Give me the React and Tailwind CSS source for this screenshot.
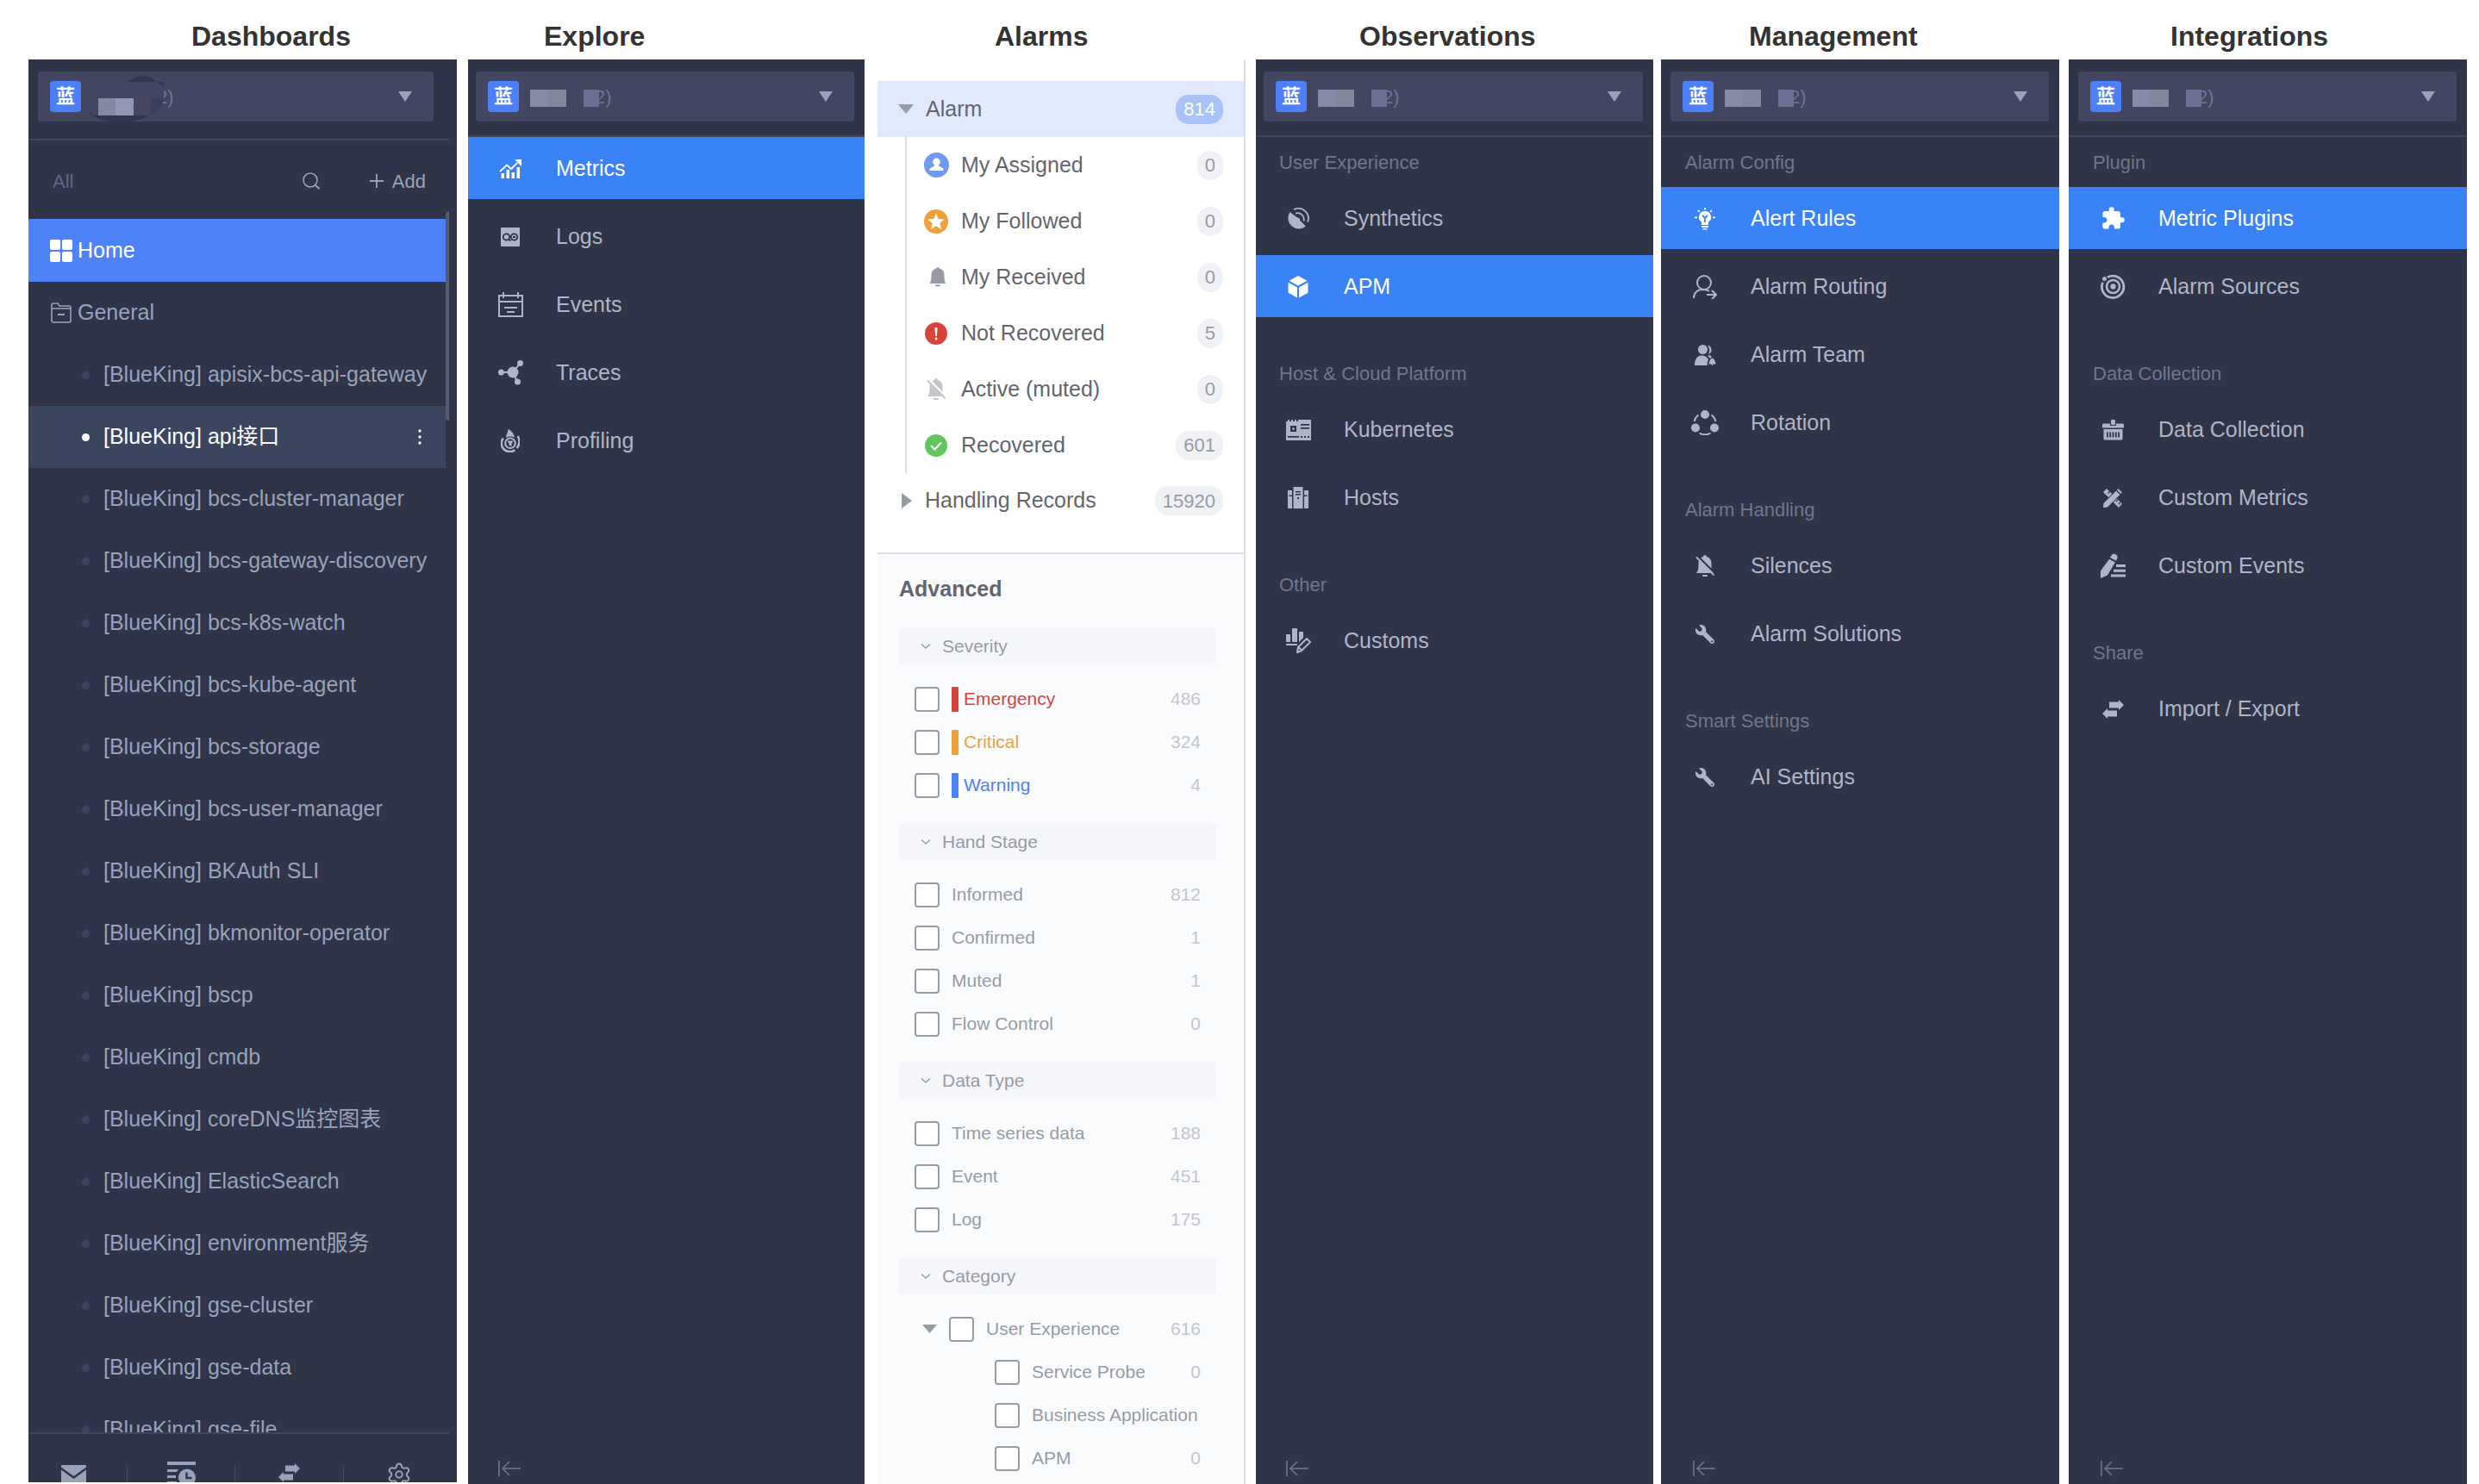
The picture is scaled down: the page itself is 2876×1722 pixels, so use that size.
import { useState } from "react";
import { MdExtension } from "react-icons/md";
import { FaWrench } from "react-icons/fa";
import { Settings } from "lucide-react";

const BG = "#2f3449";

/* ---------- icons ---------- */

function Svg({ w, h, children, className = "" }) {
  return (
    <svg width={w} height={h} viewBox={`0 0 ${w} ${h}`} fill="currentColor" aria-hidden="true" className={`shrink-0 ${className}`}>
      {children}
    </svg>
  );
}

const line = { fill: "none", stroke: "currentColor", strokeWidth: 2 };

const MetricsIcon = () => (
  <Svg w={26} h={22}>
    <path d="M1 14 9 6.500l5 4.500 7-7" {...line} />
    <path d="M18 0h8v8z" />
    <path d="M2.500 16h3.500v6H2.500zM8.500 12h3.500v10H8.500zM14.500 15h3.500v7h-3.500zM20.500 9h3.500v13h-3.500z" />
  </Svg>
);
const LogsIcon = () => (
  <Svg w={22} h={22}>
    <rect width="22" height="22" rx="1" />
    <g fill="none" stroke={BG} strokeWidth="1.800">
      <circle cx="6.500" cy="11" r="3.700" />
      <circle cx="15.500" cy="11" r="3.700" />
      <path d="M14 11h3M9 13.500l2.500 2" />
    </g>
  </Svg>
);
const EventsIcon = () => (
  <Svg w={29} h={29}>
    <path d="M1 4h27v24H1zM1 11h27M6 0v7M23 0v7M7 18h15M10 23h9" {...line} />
  </Svg>
);
const TracesIcon = () => (
  <Svg w={29} h={29}>
    <path d="M3 14h14M17 14l8-10M17 14l5 11" {...line} />
    <circle cx="17" cy="14" r="6.500" />
    <circle cx="3.500" cy="14" r="3.500" />
    <circle cx="25.500" cy="3.500" r="3.500" />
    <circle cx="22.500" cy="25" r="3.500" />
  </Svg>
);
const ProfilingIcon = () => (
  <Svg w={22} h={27}>
    <path d="M8.500 0c4 2 7 5.500 7.500 9.500-3-1.500-7.500-1.300-10 .5 0-4 2.500-6 2.500-10z" />
    <path d="M2.800 10.500a9.700 9.700 0 0 0 13.500 13.700M19.500 8a11 11 0 0 1-1 14" {...line} strokeWidth="2.600" />
    <circle cx="11" cy="16.300" r="5.800" {...line} />
    <path d="M7.500 13.500h7l-2 3.200v3.300l-3-1.500v-2z" />
  </Svg>
);
const SyntheticsIcon = () => (
  <Svg w={26} h={26}>
    <path d="M3.500 5 12 11.500a2.500 2.500 0 0 1 3 3L22 21.500A12.500 12.500 0 0 1 3.500 5z" />
    <path d="M8 2.200a11.500 11.500 0 0 1 16 14.500M10 6.500a7.500 7.500 0 0 1 9.500 9" {...line} strokeWidth="1.800" />
  </Svg>
);
const CubeIcon = () => (
  <Svg w={24} h={26}>
    <path d="M12 0l10.500 5.800L12 11.500 1.500 5.800z" />
    <path d="M.5 7.800 11 13.500V25.500L.5 19.700zM23.500 7.800 13 13.500V25.500l10.500-5.800z" />
  </Svg>
);
const KubernetesIcon = () => (
  <Svg w={29} h={24}>
    <path d="M0 2h2V0h2v2h2V0h2v2h2V0h2v2h2V0h15v24H0z" />
    <g fill={BG}>
      <path d="M5 7h7v7H5z" />
      <path d="M17 5h10v1.800H17zM17 9h10v1.800H17zM2 19h13v1.800H2zM17 19h2v2h-2zM21 19h2v2h-2zM25 19h2v2h-2z" />
    </g>
    <path d="M7.300 9.300h2.400v2.400H7.300z" />
  </Svg>
);
const HostsIcon = () => (
  <Svg w={24} h={25}>
    <path d="M0 4h5v21H0zM6.500 0h11v25h-11zM19 4h5v21h-5z" />
    <g fill={BG}>
      <path d="M9 5h6v1.400H9zM9 8h6v1.400H9zM11 12h2v2h-2zM1.500 9.500H5V11H1.500zM19 9.500h3.500V11H19z" />
    </g>
  </Svg>
);
const CustomsIcon = () => (
  <Svg w={29} h={29}>
    <rect x="0" y="7" width="5" height="9" rx="1" />
    <rect x="7" y="0" width="6" height="16" rx="1" />
    <path d="M15 5a1 1 0 0 1 1-1h3a1 1 0 0 1 1 1v6l-5 5zM0 18h13v2H0z" />
    <path d="M13 28l1-6L24 12l4 4-10 10zM14.500 22l4 4" {...line} strokeLinejoin="round" />
  </Svg>
);
const BulbIcon = () => (
  <Svg w={24} h={26}>
    <path d="M12 4a7 7 0 0 1 4 12.800V20H8v-3.200A7 7 0 0 1 12 4z" />
    <path d="M8 21h8v2H8zM9.500 24h5v1.500h-5zM11.200 0h1.700v2.500h-1.700zM0 10.500h3v1.700H0zM21 10.500h3v1.700h-3z" />
    <path d="M4 3l1.800 1.800M20 3l-1.800 1.800" {...line} strokeWidth="1.700" />
    <path d="M9 9l3 3 3-3M12 12v5" fill="none" stroke="#3a82f7" strokeWidth="1.800" />
  </Svg>
);
const RoutingIcon = () => (
  <Svg w={28} h={28}>
    <circle cx="13" cy="9" r="8" {...line} />
    <path d="M1 27c0-6 4-10 10-10 3 0 6 .3 8 2M16 23h11M22 18l5 5-5 5" {...line} />
  </Svg>
);
const TeamIcon = () => (
  <Svg w={25} h={24}>
    <circle cx="9.500" cy="5.500" r="5.500" />
    <path d="M15 .5a5.500 5.500 0 0 1 1 10.500c2-3 1.500-7-1-10.500z" />
    <path d="M0 24c0-8 4-11.500 8-11.500 3.500 0 7 1.500 8 5-1 1.500-1.500 4-1.500 6.500zM15 12.500c3-.5 4 0 5 2l-2.500 1.300z" />
    <path d="M16 22.500c1.200-1 1-6 4.500-7 3.500 1 3.300 6 4.500 7z" />
    <circle cx="20.500" cy="23" r="1" />
  </Svg>
);
const RotationIcon = () => (
  <Svg w={32} h={29}>
    <circle cx="16" cy="5" r="5" />
    <circle cx="5" cy="20.500" r="5" />
    <circle cx="27" cy="20.500" r="5" />
    <path d="M3.500 13a13 13 0 0 1 5-7.500M28.500 13a13 13 0 0 0-5-7.500M9.500 26.500a13 13 0 0 0 13 0" {...line} />
  </Svg>
);
const BellOffIcon = ({ cut = BG }) => (
  <Svg w={22} h={25}>
    <path d="M11 0a2 2 0 0 1 2 2c4 1 5.500 4 5.500 8 0 5 0 8 2.500 11h-20C3.500 18 3.500 15 3.500 10c0-4 1.500-7 5.500-8a2 2 0 0 1 2-2zM8 23h6a3 3 0 0 1-6 0z" />
    <path d="M2 .5 23 21.500" stroke={cut} strokeWidth="2" />
    <path d="M1 2.500 21.500 23.500" stroke="currentColor" strokeWidth="1.800" />
  </Svg>
);
const BellIcon = () => (
  <Svg w={20} h={23}>
    <path d="M10 0a1.800 1.800 0 0 1 1.800 1.600C16 2.500 17.500 6 17.500 10c0 5 .3 6.500 2 9H.5c1.700-2.500 2-4 2-9 0-4 1.500-7.500 5.700-8.400A1.800 1.800 0 0 1 10 0zM7 20.500h6a3 2 0 0 1-6 0z" />
  </Svg>
);
const WrenchIcon = () => <FaWrench size={22} aria-hidden="true" className="-scale-x-100" />;
const PuzzleIcon = () => <MdExtension size={29} aria-hidden="true" />;
const SourcesIcon = () => (
  <Svg w={29} h={29}>
    <circle cx="14.500" cy="14.500" r="3.200" />
    <circle cx="14.500" cy="14.500" r="7.500" {...line} strokeWidth="2.600" />
    <path d="M8 3.700a12.700 12.700 0 1 1-5.500 6" {...line} strokeWidth="2.800" />
    <circle cx="4.500" cy="5.500" r="2.500" />
  </Svg>
);
const CollectionIcon = () => (
  <Svg w={25} h={24}>
    <path d="M0 6a1.500 1.500 0 0 1 1.500-1.500H9V7h7V4.500h7.500A1.500 1.500 0 0 1 25 6v3.500H0z" />
    <rect x="10" y="0" width="5" height="6" rx="1" />
    <path d="M1.500 11h22v11a1.500 1.500 0 0 1-1.500 1.500H3A1.500 1.500 0 0 1 1.500 22z" />
    <path d="M5 14.500h1.800v6H5zM8.300 14.500h1.800v6H8.300zM11.600 14.500h1.800v6h-1.800zM14.900 14.500h1.800v6h-1.800zM18.200 14.500H20v6h-1.800z" fill={BG} />
  </Svg>
);
const ToolsIcon = () => (
  <Svg w={22} h={22}>
    <path d="M0 4 4 0 22 17.500 18 22z" />
    <path d="M7.500 3.500 5.500 5.500M17 13l-2 2M19.800 16l-2 2" stroke={BG} strokeWidth="1.300" />
    <path d="M0 22 22 0" stroke={BG} strokeWidth="8" />
    <path d="M0 22l.5-5L15 2.500 19.500 7 5 21.500zM16 1.500 17.500 0 22 4.500 20.500 6z" />
  </Svg>
);
const CustomEventsIcon = () => (
  <Svg w={29} h={29}>
    <path d="M12.500 2.500c1.500-3.500 8.500-1 7 3L18 8.800l-7-3.700zM10 6.800l7 3.700L8 25.500 0 29V20.500z" />
    <path d="M18 13h11v3H18zM15 18.800h14v3H15zM12 24.600h17v3H12z" />
  </Svg>
);
const SwapIcon = () => (
  <Svg w={25} h={22}>
    <path d="M8 2.500h11V0l6 6-6 6V9.500H8zM17 12.500H6V10l-6 6 6 6v-2.500h11z" />
  </Svg>
);
const MailIcon = () => (
  <Svg w={29} h={22}>
    <path d="M1 0h27a1 1 0 0 1 1 1v1.500L14.500 13 0 2.500V1a1 1 0 0 1 1-1z" />
    <path d="M0 5.500 14.500 16 29 5.500V22H0z" />
  </Svg>
);
const ScheduleIcon = () => (
  <Svg w={33} h={30}>
    <path d="M0 0h33v4H0zM0 9h13l-2 3H0zM0 16h10v3H0zM0 23h11v3H0z" />
    <circle cx="23" cy="18.500" r="10" />
    <path d="M22.500 12.500V19h6" fill="none" stroke={BG} strokeWidth="2.400" />
  </Svg>
);
const CollapseIcon = () => (
  <Svg w={26} h={18}>
    <path d="M1 0v18M4 9h22M13 1 5 9l8 8" {...line} />
  </Svg>
);
const SearchIcon = () => (
  <Svg w={20} h={20}>
    <circle cx="9" cy="9" r="8" {...line} strokeWidth="1.600" />
    <path d="M15 15l4.500 4" {...line} />
  </Svg>
);
const PlusIcon = () => (
  <Svg w={16} h={16}>
    <path d="M8 0v16M0 8h16" {...line} strokeWidth="1.800" />
  </Svg>
);
const HomeIcon = () => (
  <Svg w={26} h={26}>
    <rect width="12" height="12" rx="2" />
    <rect x="14" width="12" height="12" rx="2" />
    <rect y="14" width="12" height="12" rx="2" />
    <rect x="14" y="14" width="12" height="12" rx="2" />
  </Svg>
);
const FolderIcon = () => (
  <Svg w={24} h={24}>
    <path d="M1 3a2 2 0 0 1 2-2h5l2 3h11a2 2 0 0 1 2 2v15a2 2 0 0 1-2 2H3a2 2 0 0 1-2-2zM1 7h22" {...line} strokeWidth="1.600" />
    <path d="M8 14h8" {...line} />
  </Svg>
);
const MoreIcon = () => (
  <Svg w={4} h={18}>
    <circle cx="2" cy="2" r="1.700" />
    <circle cx="2" cy="9" r="1.700" />
    <circle cx="2" cy="16" r="1.700" />
  </Svg>
);
const CaretDown = ({ w = 16, h = 12, className }) => (
  <Svg w={w} h={h} className={className}>
    <path d={`M0 0H${w}L${w / 2} ${h}z`} />
  </Svg>
);
const CaretRight = () => (
  <Svg w={12} h={18}>
    <path d="M0 0v18l12-9z" />
  </Svg>
);
const Chevron = () => (
  <Svg w={12} h={8}>
    <path d="M1 1.500l5 4.500 5-4.500" {...line} strokeWidth="1.600" />
  </Svg>
);
const AssignedIcon = () => (
  <Svg w={29} h={29}>
    <circle cx="14.500" cy="14.500" r="14.500" fill="#6f9aed" />
    <path d="M14.500 6.500a4.300 4.300 0 0 1 2.500 7.800v1.200l4.500 2.500a2 2 0 0 1 .5 3H7a2 2 0 0 1 .5-3l4.500-2.500v-1.200a4.300 4.300 0 0 1 2.500-7.800z" fill="#fff" />
  </Svg>
);
const FollowedIcon = () => (
  <Svg w={28} h={28}>
    <circle cx="14" cy="14" r="14" fill="#f0a038" />
    <path d="M14 4.500l2.700 6.400 7 .6-5.300 4.600 1.600 6.900-6-3.700-6 3.700 1.600-6.900-5.300-4.600 7-.6z" fill="#fff" />
  </Svg>
);
const ErrorIcon = () => (
  <Svg w={26} h={26}>
    <circle cx="13" cy="13" r="13" fill="#d8443c" />
    <path d="M11.500 6h3l-.6 10h-1.800z" fill="#fff" />
    <circle cx="13" cy="19" r="1.500" fill="#fff" />
  </Svg>
);
const OkIcon = () => (
  <Svg w={26} h={26}>
    <circle cx="13" cy="13" r="13" fill="#5fc75d" />
    <path d="M7 13l4.500 4.500L19 9.500" fill="none" stroke="#fff" strokeWidth="2" />
  </Svg>
);

/* masked business name shown in the picker */
const MaskWide = () => (
  <Svg w={110} h={58} className="relative">
    <path d="M10 49C20 57 30 59 45 58 65 60 85 52 96 34V12H88C78 3 66 4 57 10z" fill="#31354d" />
    <path d="M12 12h76l8 6v14L82 51H12z" fill="#434660" />
    <path d="M61 31h20v20H61z" fill="#44475f" />
    <path d="M81 31h15L82 51h-1z" fill="#3c3f59" />
    <path d="M20 31h20v20H20z" fill="#85889f" />
    <path d="M40 31h21v20H40z" fill="#9297b3" />
  </Svg>
);
const MaskShort = () => (
  <Svg w={110} h={58} className="relative">
    <path d="M13 21h21v20H13z" fill="#888ba5" />
    <path d="M34 21h21v20H34z" fill="#83869b" />
    <path d="M75 21h18v20H75z" fill="#6c7092" />
  </Svg>
);

/* ---------- shared parts ---------- */

function Panel({ title, grow, titlePad, children, tone = "bg-[#2f3449]" }) {
  return (
    <section className={`flex min-w-0 flex-col ${grow}`}>
      <h2 className={`h-[69px] shrink-0 whitespace-nowrap pt-[23px] text-[32px] font-bold leading-[38px] text-[#333333] ${titlePad}`}>{title}</h2>
      <div className={`flex min-h-0 flex-1 flex-col overflow-hidden ${tone}`}>{children}</div>
    </section>
  );
}

function BizPicker({ wide }) {
  return (
    <button type="button" aria-haspopup="listbox" aria-label="Business" className="flex h-[58px] items-center overflow-hidden rounded bg-[#434660] pl-[14px] pr-[25px]">
      <span className="flex size-9 shrink-0 items-center justify-center rounded bg-[#4b80fa] text-[22px] font-bold leading-none text-white">蓝</span>
      {wide ? <MaskWide /> : <MaskShort />}
      <span className="-ml-[22px] text-[22px] text-[#6b7590]">2)</span>
      <CaretDown className="ml-auto text-[#98a2b8]" />
    </button>
  );
}

function NavPanel({ title, grow, titlePad, groups, shifted, initial }) {
  const [active, setActive] = useState(initial);
  return (
    <Panel title={title} grow={grow} titlePad={titlePad}>
      <div className={`flex h-[90px] shrink-0 flex-col border-b-2 border-[#40455a] pt-[14px] pr-3 ${shifted ? "pl-[11px]" : "pl-[9px]"}`}>
        <BizPicker />
      </div>
      <nav className="flex flex-1 flex-col gap-9">
        {groups.map((g, i) => (
          <div key={i}>
            {g.label && <h3 className={`pt-px text-[22px] leading-[57px] text-[#717689] ${shifted ? "pl-7" : "pl-[27px]"}`}>{g.label}</h3>}
            <ul className="flex flex-col gap-[7px]">
              {g.items.map(([label, Icon]) => (
                <li key={label}>
                  <a
                    href="#"
                    onClick={() => setActive(label)}
                    className={`flex h-[72px] items-center gap-[35px] pt-px text-[25px] ${shifted ? "pl-[33px]" : "pl-[31px]"} ${active === label ? "bg-[#3a82f7] text-white" : "text-[#b0b5c6]"}`}
                  >
                    <span className="flex w-9 shrink-0 justify-center">
                      <Icon />
                    </span>
                    {label}
                  </a>
                </li>
              ))}
            </ul>
          </div>
        ))}
      </nav>
      <button type="button" aria-label="Collapse menu" className={`mb-[9px] w-fit text-[#63687a] ${shifted ? "ml-[37px]" : "ml-[35px]"}`}>
        <CollapseIcon />
      </button>
    </Panel>
  );
}

/* ---------- dashboards ---------- */

const boards = [
  "apisix-bcs-api-gateway", "api接口", "bcs-cluster-manager", "bcs-gateway-discovery", "bcs-k8s-watch", "bcs-kube-agent",
  "bcs-storage", "bcs-user-manager", "BKAuth SLI", "bkmonitor-operator", "bscp", "cmdb", "coreDNS监控图表", "ElasticSearch",
  "environment服务", "gse-cluster", "gse-data", "gse-file",
];

const footerActions = [
  ["Mail subscriptions", MailIcon],
  ["Schedules", ScheduleIcon],
  ["Import and export", SwapIcon],
  ["Settings", () => <Settings size={30} strokeWidth={1.6} aria-hidden="true" />],
];
const footerPads = ["pr-2.5 pt-1", "", "pt-0.5", "pr-1"];

function Dashboards() {
  return (
    <Panel title="Dashboards" grow="flex-[497_1_0%] pb-0.5" titlePad="pl-[189px]">
      <div className="mr-[9px] flex h-[94px] shrink-0 flex-col border-b-2 border-[#40455a] pl-[11px] pr-[18px] pt-[14px]">
        <BizPicker wide />
      </div>
      <div className="flex h-[82px] shrink-0 items-center pl-7 pr-9 pt-3 text-[22px]">
        <button type="button" className="text-[#616883]">All</button>
        <button type="button" aria-label="Search" className="ml-auto mr-[58px] text-[#98a2b8]">
          <SearchIcon />
        </button>
        <button type="button" className="flex items-center gap-2.5 text-[#98a2b8]">
          <PlusIcon />
          Add
        </button>
      </div>
      <div className="relative mr-[9px] min-h-0 flex-1 overflow-hidden pr-1 pt-[9px] text-[25px] text-[#98a2b8]">
        <div className="absolute right-0 top-0 h-[243px] w-1 rounded-l bg-[#555a6d]" />
        <a href="#" className="flex h-[73px] items-center gap-1.5 bg-[#4e82f8] pl-[25px] text-white">
          <HomeIcon />
          Home
        </a>
        <a href="#" className="flex h-[72px] items-center gap-[7px] pl-[26px]">
          <FolderIcon />
          General
        </a>
        <ul>
          {boards.map((name, i) => (
            <li key={name} className={`flex h-[72px] items-center whitespace-nowrap pl-[62px] pr-7 ${i === 1 ? "bg-[#3c455f] text-white" : ""}`}>
              <span className={`mr-4 size-[9px] shrink-0 rounded-full ${i === 1 ? "bg-white" : "bg-[#3b4460]"}`} />
              <a href="#">[BlueKing] {name}</a>
              {i === 1 && (
                <button type="button" aria-label="More" className="ml-auto">
                  <MoreIcon />
                </button>
              )}
            </li>
          ))}
        </ul>
      </div>
      <div className="mr-[9px] h-0.5 shrink-0 bg-[#40455a]" />
      <div className="grid h-[56px] shrink-0 grid-cols-[115fr_125fr_126fr_131fr] overflow-hidden text-[#98a2b8]">
        {footerActions.map(([label, Icon], i) => (
          <div key={label} className="flex pt-8">
            <button type="button" aria-label={label} className={`flex flex-1 items-start justify-center ${footerPads[i]}`}>
              <Icon />
            </button>
            {i < 3 && <span className="mt-1 h-9 w-px bg-[#454a5f]" />}
          </div>
        ))}
      </div>
    </Panel>
  );
}

/* ---------- alarms ---------- */

function Badge({ children, tone = "bg-[#f0f1f5] text-[#979ba5]" }) {
  return <span className={`ml-auto flex h-[34px] items-center rounded-[15px] px-[9px] text-[22px] ${tone}`}>{children}</span>;
}

const alarmItems = [
  ["My Assigned", 0, <AssignedIcon />],
  ["My Followed", 0, <FollowedIcon />],
  ["My Received", 0, <span className="pl-[3px] text-[#979ba5]"><BellIcon /></span>],
  ["Not Recovered", 5, <ErrorIcon />],
  ["Active (muted)", 0, <span className="text-[#c4c6cc]"><BellOffIcon cut="#ffffff" /></span>],
  ["Recovered", 601, <OkIcon />],
];

const filters = [
  ["Severity", [
    ["Emergency", 486, "bg-[#d8443c]", "text-[#d8443c]"],
    ["Critical", 324, "bg-[#f0a038]", "text-[#f0a038]"],
    ["Warning", 4, "bg-[#4e82f8]", "text-[#4e82f8]"],
  ]],
  ["Hand Stage", [["Informed", 812], ["Confirmed", 1], ["Muted", 1], ["Flow Control", 0]]],
  ["Data Type", [["Time series data", 188], ["Event", 451], ["Log", 175]]],
];

function CheckRow({ label, count, bar, tone = "text-[#979ba5]", indent = "pl-[18px]", caret }) {
  return (
    <div className={`flex h-[50px] items-center pr-[18px] ${indent}`}>
      {caret && (
        <button type="button" aria-label="Collapse group" className="mr-[14px] text-[#979ba5]">
          <CaretDown w={17} h={10} />
        </button>
      )}
      <label className="flex min-w-0 flex-1 items-center overflow-hidden">
        <input type="checkbox" className="size-[29px] shrink-0 appearance-none rounded border-2 border-[#979ba5] bg-white checked:bg-[#979ba5]" />
        {bar && <span className={`-mr-2 ml-[14px] h-[29px] w-2 shrink-0 rounded-[1px] ${bar}`} />}
        <span className={`ml-[14px] shrink-0 whitespace-nowrap text-[21px] ${tone}`}>{label}</span>
        {count !== undefined && <span className="ml-auto text-[21px] text-[#c4c6cc]">{count}</span>}
      </label>
    </div>
  );
}

function FilterGroup({ label, children }) {
  return (
    <div className="pb-[19px]">
      <button type="button" className="mb-[15px] flex h-[43px] w-full items-center gap-[13px] rounded bg-[#f5f6fa] pl-[25px] text-[21px] text-[#979ba5]">
        <Chevron />
        {label}
      </button>
      {children}
    </div>
  );
}

function Alarms() {
  return (
    <Panel title="Alarms" grow="ml-[15px] flex-[427_1_0%]" titlePad="pl-[136px]" tone="border-r-2 border-[#dcdee5] bg-white">
      <div className="shrink-0 pb-7 pt-[25px] text-[25px] text-[#63656e]">
        <a href="#" className="flex h-[65px] items-center gap-[14px] bg-[#e1eafc] pl-6 pr-6">
          <CaretDown w={18} h={11} className="text-[#979ba5]" />
          Alarm
          <Badge tone="bg-[#a9c3f8] text-white">814</Badge>
        </a>
        <ul className="ml-8 border-l-2 border-[#dcdee5]">
          {alarmItems.map(([label, count, icon]) => (
            <li key={label}>
              <a href="#" className="flex h-[65px] items-center pl-4 pr-6">
                <span className="mr-[11px] flex w-9 shrink-0 justify-center">{icon}</span>
                {label}
                <Badge>{count}</Badge>
              </a>
            </li>
          ))}
        </ul>
        <a href="#" className="flex h-[64px] items-center gap-[15px] pl-7 pr-6">
          <span className="text-[#979ba5]"><CaretRight /></span>
          Handling Records
          <Badge>15920</Badge>
        </a>
      </div>
      <div className="min-h-0 flex-1 overflow-hidden border-t-2 border-[#dcdee5] bg-[#fafbfd] pl-[25px] pr-8">
        <h3 className="pb-[23px] pt-[19px] text-[25px] font-bold leading-[43px] text-[#63656e]">Advanced</h3>
        {filters.map(([label, rows]) => (
          <FilterGroup key={label} label={label}>
            {rows.map(([name, count, bar, tone]) => (
              <CheckRow key={name} label={name} count={count} bar={bar} tone={tone} />
            ))}
          </FilterGroup>
        ))}
        <FilterGroup label="Category">
          <CheckRow label="User Experience" count={616} indent="pl-[27px]" caret />
          <CheckRow label="Service Probe" count={0} indent="pl-[111px]" />
          <CheckRow label="Business Application" indent="pl-[111px]" />
          <CheckRow label="APM" count={0} indent="pl-[111px]" />
        </FilterGroup>
      </div>
    </Panel>
  );
}

/* ---------- page ---------- */

const exploreGroups = [
  { items: [["Metrics", MetricsIcon], ["Logs", LogsIcon], ["Events", EventsIcon], ["Traces", TracesIcon], ["Profiling", ProfilingIcon]] },
];
const observationGroups = [
  { label: "User Experience", items: [["Synthetics", SyntheticsIcon], ["APM", CubeIcon]] },
  { label: "Host & Cloud Platform", items: [["Kubernetes", KubernetesIcon], ["Hosts", HostsIcon]] },
  { label: "Other", items: [["Customs", CustomsIcon]] },
];
const managementGroups = [
  { label: "Alarm Config", items: [["Alert Rules", BulbIcon], ["Alarm Routing", RoutingIcon], ["Alarm Team", TeamIcon], ["Rotation", RotationIcon]] },
  { label: "Alarm Handling", items: [["Silences", BellOffIcon], ["Alarm Solutions", WrenchIcon]] },
  { label: "Smart Settings", items: [["AI Settings", WrenchIcon]] },
];
const integrationGroups = [
  { label: "Plugin", items: [["Metric Plugins", PuzzleIcon], ["Alarm Sources", SourcesIcon]] },
  { label: "Data Collection", items: [["Data Collection", CollectionIcon], ["Custom Metrics", ToolsIcon], ["Custom Events", CustomEventsIcon]] },
  { label: "Share", items: [["Import / Export", SwapIcon]] },
];

export default function App() {
  return (
    <main className="flex h-screen overflow-hidden bg-white pl-[33px] pr-[14px] font-['Liberation_Sans','Noto_Sans_CJK_SC',sans-serif]">
      <Dashboards />
      <NavPanel title="Explore" grow="ml-[13px] flex-[460_1_0%]" titlePad="pl-[88px]" groups={exploreGroups} initial="Metrics" />
      <Alarms />
      <NavPanel title="Observations" grow="ml-3 flex-[461_1_0%]" titlePad="pl-[120px]" groups={observationGroups} initial="APM" />
      <NavPanel title="Management" grow="ml-[9px] flex-[462_1_0%]" titlePad="pl-[102px]" groups={managementGroups} initial="Alert Rules" shifted />
      <NavPanel title="Integrations" grow="ml-[11px] flex-[462_1_0%]" titlePad="pl-[118px]" groups={integrationGroups} initial="Metric Plugins" shifted />
    </main>
  );
}
